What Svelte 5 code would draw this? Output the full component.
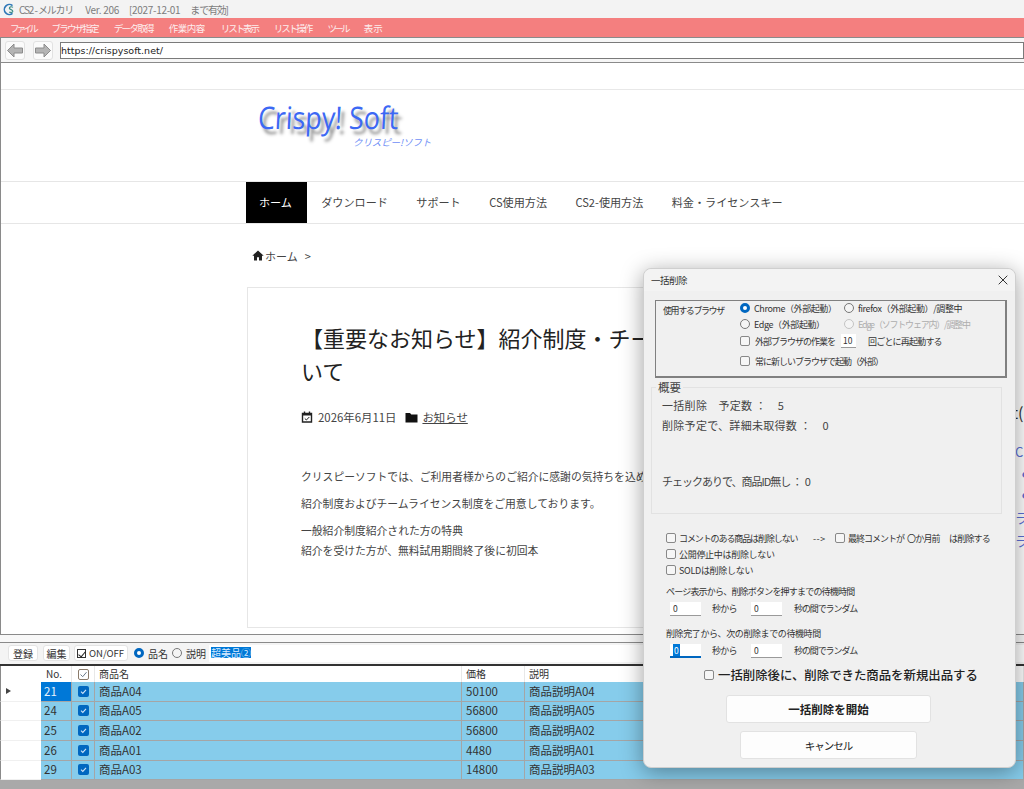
<script>
  const menus = [
    { label: 'ファイル', spacing: -3.1 },
    { label: 'ブラウザ指定', spacing: -1.8 },
    { label: 'データ取得', spacing: -1.7 },
    { label: '作業内容', spacing: -0.5 },
    { label: 'リスト表示', spacing: -2.1 },
    { label: 'リスト操作', spacing: -2 },
    { label: 'ツール', spacing: -2.7 },
    { label: '表示', spacing: 0 }
  ];
  const navs = ['ダウンロード', 'サポート', 'CS使用方法', 'CS2-使用方法', '料金・ライセンスキー'];
  const rows = [
    { no: 21, name: '商品A04', price: 50100, desc: '商品説明A04' },
    { no: 24, name: '商品A05', price: 56800, desc: '商品説明A05' },
    { no: 25, name: '商品A02', price: 56800, desc: '商品説明A02' },
    { no: 26, name: '商品A01', price: 4480, desc: '商品説明A01' },
    { no: 29, name: '商品A03', price: 14800, desc: '商品説明A03' }
  ];
</script>

<div class="app">
  <div class="titlebar">
    <svg class="app-icon" width="12" height="13" viewBox="0 0 12 13">
      <path d="M9.5 2.6 A5 5 0 1 0 9.5 10.4" fill="none" stroke="#2f78b8" stroke-width="1.6" />
      <path d="M10 4.4 C8.6 3.3 6.2 3.7 6.4 5.4 C6.6 7 9.8 6.3 9.8 8.2 C9.8 9.6 7.6 9.8 6.2 8.9" fill="none" stroke="#3f8f8a" stroke-width="1.2" />
    </svg>
    <span class="t-name">CS2 - メルカリ</span>
    <span class="t-ver">Ver. 206</span>
    <span class="t-date">[2027-12-01</span>
    <span class="t-until">まで有効]</span>
  </div>

  <div class="menubar">
    {#each menus as m}
      <span style="letter-spacing: {m.spacing}px">{m.label}</span>
    {/each}
  </div>

  <div class="urlbar">
    <button class="nav-btn" aria-label="戻る">
      <svg width="18" height="15" viewBox="0 0 18 15"><path d="M8 1 L1.5 7.5 L8 14 V10 H16.5 V5 H8 Z" fill="#b4b4b4" stroke="#8c8c8c" /></svg>
    </button>
    <button class="nav-btn" aria-label="進む">
      <svg width="18" height="15" viewBox="0 0 18 15"><path d="M10 1 L16.5 7.5 L10 14 V10 H1.5 V5 H10 Z" fill="#b4b4b4" stroke="#8c8c8c" /></svg>
    </button>
    <div class="url">https://crispysoft.net/</div>
  </div>

  <div class="web">
    <div class="site-top"></div>
    <div class="logo">
      <div class="logo-main">Crispy! Soft</div>
      <div class="logo-sub">クリスピー!ソフト</div>
    </div>
    <nav class="site-nav">
      <span class="active">ホーム</span>
      {#each navs as n}
        <span>{n}</span>
      {/each}
    </nav>
    <div class="crumb">
      <svg width="12" height="11" viewBox="0 0 12 11"><path d="M6 0.5 L0.3 5.8 H2 V10.5 H5 V7.2 H7 V10.5 H10 V5.8 H11.7 Z" fill="#222" /></svg>
      <span>ホーム</span>
      <span class="gt">&gt;</span>
    </div>
    <div class="columns">
      <article class="card">
        <h1>【重要なお知らせ】紹介制度・チームライセンス制度について</h1>
        <div class="meta">
          <svg width="12" height="12" viewBox="0 0 12 12"><path d="M1.5 2.5 H10.5 V11 H1.5 Z M3.5 0.5 V2.5 M8.5 0.5 V2.5" fill="none" stroke="#222" stroke-width="1.4" /><path d="M1.5 2 H10.5 V4.5 H1.5 Z" fill="#222" /><path d="M3.8 7.5 L5.4 9 L8.3 6" fill="none" stroke="#222" /></svg>
          <span>2026年6月11日</span>
          <svg class="folder" width="13" height="11" viewBox="0 0 13 11"><path d="M0.5 1 H5 L6.3 2.5 H12.5 V10.5 H0.5 Z" fill="#111" /></svg>
          <a href="#top">お知らせ</a>
        </div>
        <p class="first">クリスピーソフトでは、ご利用者様からのご紹介に感謝の気持ちを込めて</p>
        <p>紹介制度およびチームライセンス制度をご用意しております。</p>
        <p>一般紹介制度紹介された方の特典<br />紹介を受けた方が、無料試用期間終了後に初回本</p>
      </article>
      <aside class="side">
        <div class="side-head">t(</div>
        <div class="side-link">C</div>
        <div class="side-dot">●</div>
        <div class="side-dot">●</div>
        <div class="side-link">ラ</div>
        <div class="side-link">ラ</div>
      </aside>
    </div>
  </div>

  <div class="split"></div>

  <div class="tools">
    <button class="tbtn b1">登録</button>
    <button class="tbtn b2">編集</button>
    <button class="tbtn b3"><i class="mini-check"></i>ON/OFF</button>
    <i class="radio on small"></i><span class="tlabel">品名</span>
    <i class="radio small"></i><span class="tlabel">説明</span>
    <div class="search"><span>超美品②</span></div>
  </div>

  <div class="grid">
    <div class="row head">
      <div class="c rowhead"></div>
      <div class="c no">No.</div>
      <div class="c chk">
        <svg width="11" height="11" viewBox="0 0 11 11"><rect x="0.5" y="0.5" width="10" height="10" rx="1.5" fill="none" stroke="#8a7a6a" /><path d="M2.5 5.5 L4.7 7.7 L8.5 3.2" fill="none" stroke="#6a7a8a" /></svg>
      </div>
      <div class="c">商品名</div>
      <div class="c">価格</div>
      <div class="c">説明</div>
    </div>
    {#each rows as r, i}
      <div class="row item">
        <div class="c rowhead">{#if i === 0}<i class="marker"></i>{/if}</div>
        <div class="c no" class:current={i === 0}>{r.no}</div>
        <div class="c chk"><i class="blue-check">
          <svg width="11" height="11" viewBox="0 0 11 11"><path d="M3 5.7 L4.8 7.4 L8 3.8" fill="none" stroke="#cfe4f7" stroke-width="1.1" /></svg>
        </i></div>
        <div class="c">{r.name}</div>
        <div class="c">{r.price}</div>
        <div class="c">{r.desc}</div>
      </div>
    {/each}
  </div>

  <div class="dialog">
    <div class="dlg-title">
      <span>一括削除</span>
      <svg width="10" height="10" viewBox="0 0 10 10"><path d="M0.7 0.7 L9.3 9.3 M9.3 0.7 L0.7 9.3" stroke="#333" stroke-width="1" /></svg>
    </div>
    <div class="dlg-body">
      <div class="browser-box">
        <div class="browser-label">使用するブラウザ</div>
        <div class="browser-opts">
          <div class="two r1">
            <label><i class="radio on"></i>Chrome（外部起動）</label>
            <label><i class="radio"></i>firefox（外部起動）/調整中</label>
          </div>
          <div class="two r2">
            <label><i class="radio"></i>Edge（外部起動）</label>
            <label class="disabled"><i class="radio"></i>Edge（ソフトウェア内）/調整中</label>
          </div>
          <div class="line r3">
            <i class="check"></i><span class="ext">外部ブラウザの作業を</span>
            <span class="input restart">10</span>
            <span class="after-input">回ごとに再起動する</span>
          </div>
          <div class="line r4"><i class="check"></i><span class="ext">常に新しいブラウザで起動（外部）</span></div>
        </div>
      </div>

      <fieldset class="summary">
        <legend>概要</legend>
        <div class="sum-row">一括削除　予定数 ：　5</div>
        <div class="sum-row">削除予定で、詳細未取得数 ：　0</div>
        <div class="sum-row gap">チェックありで、商品ID無し ：&nbsp; 0</div>
      </fieldset>

      <div class="opts">
        <div class="line">
          <i class="check"></i><span class="w-comment">コメントのある商品は削除しない</span>
          <span class="arrow">--&gt;</span>
          <i class="check"></i><span class="w-last">最終コメントが</span>
          <span class="w-month">〇か月前</span>
          <span>は削除する</span>
        </div>
        <div class="line"><i class="check"></i><span class="wide">公開停止中は削除しない</span></div>
        <div class="line"><i class="check"></i><span class="wide">SOLDは削除しない</span></div>
      </div>

      <div class="wait-label first-wait">ページ表示から、削除ボタンを押すまでの待機時間</div>
      <div class="wait-row">
        <span class="input">0</span><span class="sec">秒から</span><span class="input">0</span><span class="rand">秒の間でランダム</span>
      </div>
      <div class="wait-label second-wait">削除完了から、次の削除までの待機時間</div>
      <div class="wait-row">
        <span class="input focus"><b>0</b></span><span class="sec">秒から</span><span class="input">0</span><span class="rand">秒の間でランダム</span>
      </div>

      <div class="relist"><i class="check"></i><span>一括削除後に、削除できた商品を新規出品する</span></div>
      <button class="start">一括削除を開始</button>
      <button class="cancel">キャンセル</button>
    </div>
  </div>
</div>

<style>
  :global(body) {
    margin: 0;
  }

  * {
    box-sizing: border-box;
  }

  i {
    display: inline-block;
    font-style: normal;
    flex: none;
  }

  .app {
    position: relative;
    width: 1024px;
    height: 789px;
    display: flex;
    flex-direction: column;
    overflow: hidden;
    background: #a9a9a9;
    font-family: "Noto Sans CJK JP", "Noto Sans", sans-serif;
    color: #333;
  }

  .titlebar {
    height: 18px;
    flex: none;
    display: flex;
    align-items: center;
    padding-left: 3px;
    background: #f3f3f3;
    color: #7c7c7c;
    font-size: 10px;
  }

  .app-icon {
    margin-right: 4px;
    flex: none;
  }

  .t-name {
    letter-spacing: -1.1px;
  }

  .t-ver {
    margin-left: 12px;
    letter-spacing: -0.3px;
  }

  .t-date {
    margin-left: 10px;
    letter-spacing: -0.3px;
  }

  .t-until {
    margin-left: 10px;
    letter-spacing: -1.2px;
  }

  .menubar {
    height: 19px;
    flex: none;
    display: flex;
    align-items: center;
    gap: 16px;
    padding-left: 10px;
    background: #f47f7f;
    color: #fdeeee;
    font-size: 9.5px;
  }

  .urlbar {
    height: 25px;
    flex: none;
    display: flex;
    align-items: center;
    border-top: 1px solid #8a8a8a;
    border-left: 1px solid #8a8a8a;
    background: #f6f6f6;
    padding: 1px 0 0 4px;
  }

  .nav-btn {
    width: 20px;
    height: 19px;
    margin-right: 8px;
    padding: 0;
    display: flex;
    align-items: center;
    justify-content: center;
    border: 1px solid #e2e2e2;
    border-radius: 3px;
    background: #fbfbfb;
  }

  .nav-btn + .nav-btn {
    margin-right: 7px;
  }

  .url {
    flex: 1;
    height: 17px;
    border: 1px solid #7a7a7a;
    background: #fff;
    color: #222;
    font: 9.5px/15px "DejaVu Sans", sans-serif;
  }

  .web {
    height: 573px;
    flex: none;
    border: solid #8a8a8a;
    border-width: 1px 0 1px 1px;
    background: #fff;
    overflow: hidden;
  }

  .site-top {
    height: 27px;
    border-bottom: 1px solid #e8e8e8;
  }

  .logo {
    height: 91px;
    padding: 9px 0 0 257px;
  }

  .logo-main {
    font: 27px/36px "Open Sans", sans-serif;
    letter-spacing: -0.1px;
    color: #3c68f4;
    text-shadow: 4px 5px 3px #8c8c8c;
    transform: skewX(-3deg) scaleY(1.15);
    width: 150px;
  }

  .logo-sub {
    margin: 1px 0 0 95px;
    font-size: 9.5px;
    font-style: italic;
    line-height: 12px;
    color: #6f8ff6;
    letter-spacing: -0.1px;
  }

  .site-nav {
    height: 43px;
    display: flex;
    border-top: 1px solid #e6e6e6;
    border-bottom: 1px solid #e6e6e6;
    padding-left: 245px;
    font-size: 11.1px;
    color: #444;
  }

  .site-nav span {
    padding: 0 14.25px;
    line-height: 40px;
  }

  .site-nav .active {
    padding: 0 13px;
    width: 61px;
    background: #000;
    color: #fff;
  }

  .crumb {
    height: 63px;
    display: flex;
    align-items: center;
    padding: 0 0 0 251px;
    font-size: 11px;
    color: #444;
    gap: 1px;
  }

  .gt {
    margin-left: 6px;
  }

  .columns {
    display: flex;
    align-items: flex-start;
    padding-left: 246px;
  }

  .card {
    width: 686px;
    flex: none;
    border: 1px solid #e6e6e6;
    padding: 33px 53px 67px;
    font-size: 10.8px;
    color: #444;
  }

  h1 {
    margin: 0;
    font-size: 22px;
    font-weight: 400;
    line-height: 33px;
    color: #222;
  }

  .meta {
    display: flex;
    align-items: center;
    height: 16px;
    margin-top: 22px;
    font-size: 11.4px;
    color: #444;
  }

  .meta > span {
    margin-left: 5px;
  }

  .folder {
    margin: 0 4px 0 9px;
  }

  .meta a {
    color: #444;
  }

  p {
    margin: 7px 0 0;
    line-height: 20px;
    white-space: nowrap;
  }

  p.first {
    margin-top: 41px;
  }

  .side {
    margin-left: 77px;
    flex: none;
    width: 60px;
    padding-top: 111px;
    color: #5b70d8;
  }

  .side-head {
    height: 28px;
    padding-left: 2px;
    font-size: 16px;
    line-height: 28px;
    color: #333;
  }

  .side-link {
    margin-top: 15px;
    height: 22px;
    padding-left: 5px;
    font-size: 13px;
    line-height: 22px;
  }

  .side-link + .side-link {
    margin-top: 1px;
  }

  .side-dot {
    height: 21px;
    margin-top: 1px;
    padding-left: 12px;
    font-size: 7px;
    line-height: 21px;
  }

  .side-dot + .side-dot {
    margin-top: 0;
  }

  .side-dot + .side-link {
    margin-top: 1px;
  }

  .split {
    height: 8px;
    flex: none;
    background: #f8f8f8;
    border-bottom: 1px solid #8a8a8a;
  }

  .tools {
    height: 23px;
    flex: none;
    display: flex;
    align-items: center;
    background: #f4f4f4;
    border-bottom: 2px solid #333;
    padding-bottom: 1px;
    font-size: 10px;
    color: #333;
  }

  .tbtn {
    height: 16px;
    padding: 0;
    border: 1px solid #e4e4e4;
    border-radius: 3px;
    background: #fff;
    font: inherit;
    color: #333;
  }

  .b1 {
    width: 30px;
    margin-left: 8px;
  }

  .b2 {
    width: 27px;
    margin-left: 5px;
  }

  .b3 {
    width: 54px;
    margin: 0 6px 0 4px;
    display: flex;
    align-items: center;
    padding-left: 2px;
    font-size: 9.5px;
  }

  .mini-check {
    width: 9px;
    height: 9px;
    margin-right: 3px;
    border: 1px solid #333;
    background: #fff;
    position: relative;
  }

  .mini-check::after {
    content: "";
    position: absolute;
    left: 2px;
    top: 0;
    width: 3px;
    height: 6px;
    border: solid #222;
    border-width: 0 1px 1px 0;
    transform: rotate(40deg);
  }

  .tlabel {
    margin: 0 4px;
  }

  .search {
    flex: 1;
    height: 17px;
    margin-left: -1px;
    padding-left: 2px;
    background: #fff;
    line-height: 15px;
  }

  .search span {
    background: #0078d7;
    color: #dcecff;
    display: inline-block;
    height: 11px;
    line-height: 11px;
    margin-top: 2px;
  }

  .grid {
    flex: none;
    font-size: 11.5px;
  }

  .row {
    display: grid;
    grid-template-columns: 41px 31px 23px 367px 63px 1fr;
    height: 19.67px;
  }

  .row.head {
    height: 16px;
    font-size: 10px;
    color: #333;
  }

  .c {
    padding: 0 0 1px 4px;
    background: #86cceb;
    border: solid #a5a5a5;
    border-width: 0 1px 1px 0;
    display: flex;
    align-items: center;
    white-space: nowrap;
    overflow: hidden;
  }

  .head .c {
    background: #fff;
    border-width: 0 1px 0 0;
    border-color: #e8e8e8;
  }

  .c.rowhead {
    background: #fff;
    padding-left: 5px;
    border-color: #f0f0f0;
    border-right: 0;
    border-left: 1px solid #8a8a8a;
  }

  .c.no {
    padding-left: 3px;
  }

  .c.current {
    background: #0078d7;
    color: #e6f2fb;
  }

  .head .no {
    padding-left: 5px;
  }

  .c.chk {
    padding: 0;
    justify-content: center;
  }

  .marker {
    width: 0;
    height: 0;
    border-left: 5px solid #444;
    border-top: 3.5px solid transparent;
    border-bottom: 3.5px solid transparent;
  }

  .blue-check {
    width: 11px;
    height: 11px;
    border-radius: 2px;
    background: #0067c0;
    line-height: 0;
  }

  .radio {
    width: 10px;
    height: 10px;
    border: 1px solid #777;
    border-radius: 50%;
    background: #f4f4f4;
  }

  .radio.on {
    border: 3px solid #0067c0;
    background: #fff;
  }

  .dialog {
    position: absolute;
    left: 643px;
    top: 268px;
    width: 373px;
    height: 500px;
    border-radius: 8px;
    background: #f0f0f0;
    border: 1px solid #cfcfcf;
    box-shadow: 0 4px 22px rgba(0, 0, 0, 0.38);
    font-size: 9px;
    letter-spacing: -0.8px;
    color: #333;
  }

  .dlg-title {
    height: 22px;
    display: flex;
    align-items: center;
    justify-content: space-between;
    padding: 0 7px;
    background: #f3f3f3;
    border-radius: 8px 8px 0 0;
    font-size: 9.5px;
    letter-spacing: -0.5px;
  }

  .dlg-body {
    padding: 9px 0 0 11px;
  }

  .browser-box {
    width: 352px;
    height: 78px;
    display: flex;
    border: 1px solid #808080;
    border-right-width: 2px;
    border-bottom-width: 2px;
  }

  .browser-label {
    width: 84px;
    padding: 3px 0 0 7px;
    line-height: 14px;
    letter-spacing: -1.4px;
  }

  .browser-opts {
    flex: 1;
  }

  .two {
    display: grid;
    grid-template-columns: 104px 1fr;
    height: 14px;
    letter-spacing: -0.4px;
  }

  .two label {
    display: flex;
    align-items: center;
    white-space: nowrap;
  }

  .two .radio {
    margin-right: 4px;
  }

  .r2 {
    margin-top: 2px;
  }

  .disabled {
    color: #adadad;
    letter-spacing: -1.2px;
  }

  .disabled .radio {
    border-color: #c4c4c4;
  }

  .line {
    display: flex;
    align-items: center;
    height: 16px;
    white-space: nowrap;
  }

  .r3 {
    margin-top: 2px;
  }

  .r4 {
    margin-top: 4px;
  }

  .check {
    width: 10px;
    height: 10px;
    margin-right: 3px;
    border: 1px solid #888;
    border-radius: 2px;
    background: #f6f6f6;
  }

  .ext {
    margin-left: 2px;
    letter-spacing: -1px;
  }

  .input {
    display: inline-block;
    width: 31px;
    height: 14px;
    padding-left: 3px;
    background: #fff;
    border-bottom: 1px solid #9a9a9a;
    line-height: 13px;
    letter-spacing: 0;
    font-size: 8.5px;
    flex: none;
  }

  .restart {
    width: 15px;
    margin-left: 6px;
    padding-left: 2px;
  }

  .after-input {
    margin-left: 12px;
  }

  .summary {
    width: 351px;
    height: 135px;
    margin: 1px 0 0 -4px;
    padding: 0 0 0 10px;
    border: 1px solid #e2e2e2;
    min-inline-size: 0;
  }

  legend {
    margin-left: -6px;
    padding: 0 2px;
    font-size: 11.5px;
    line-height: 16px;
    letter-spacing: 0;
    color: #444;
  }

  .sum-row {
    height: 20px;
    line-height: 20px;
    font-size: 11px;
    letter-spacing: 0.3px;
    color: #444;
  }

  .sum-row.gap {
    margin-top: 36px;
    letter-spacing: -1px;
  }

  .opts {
    margin: 16px 0 0 11px;
  }

  .w-comment {
    width: 134px;
    letter-spacing: -1.1px;
  }

  .arrow {
    width: 22px;
    letter-spacing: 0.5px;
  }

  .w-last {
    width: 59px;
    letter-spacing: -1px;
  }

  .w-month {
    width: 42px;
  }

  .wide {
    letter-spacing: -0.3px;
  }

  .wait-label {
    height: 14px;
    line-height: 14px;
    margin-left: 11px;
    white-space: nowrap;
  }

  .first-wait {
    margin-top: 7px;
  }

  .second-wait {
    margin-top: 11px;
    letter-spacing: -0.4px;
  }

  .wait-row {
    display: flex;
    margin: 3px 0 0 15px;
    height: 14px;
    line-height: 14px;
  }

  .sec {
    width: 50px;
    padding-left: 11px;
  }

  .rand {
    margin-left: 12px;
    letter-spacing: -1.1px;
  }

  .focus {
    border-bottom: 2px solid #0067c0;
  }

  .focus b {
    font-weight: 400;
    background: #0078d7;
    color: #fff;
    padding: 0 1px;
  }

  .relist {
    display: flex;
    align-items: center;
    height: 20px;
    margin: 7px 0 0 49px;
    font-size: 12.4px;
    font-weight: 500;
    letter-spacing: 0;
    white-space: nowrap;
    color: #222;
  }

  .relist .check {
    margin-right: 4px;
  }

  .start,
  .cancel {
    display: block;
    height: 28px;
    padding: 0;
    border: 1px solid #e2e2e2;
    border-radius: 3px;
    background: #fdfdfd;
    font-family: inherit;
    color: #222;
  }

  .start {
    width: 205px;
    margin: 10px 0 0 71px;
    font-size: 11.5px;
    font-weight: 700;
  }

  .cancel {
    width: 177px;
    margin: 8px 0 0 85px;
    font-size: 10.5px;
    letter-spacing: -1px;
  }
</style>
